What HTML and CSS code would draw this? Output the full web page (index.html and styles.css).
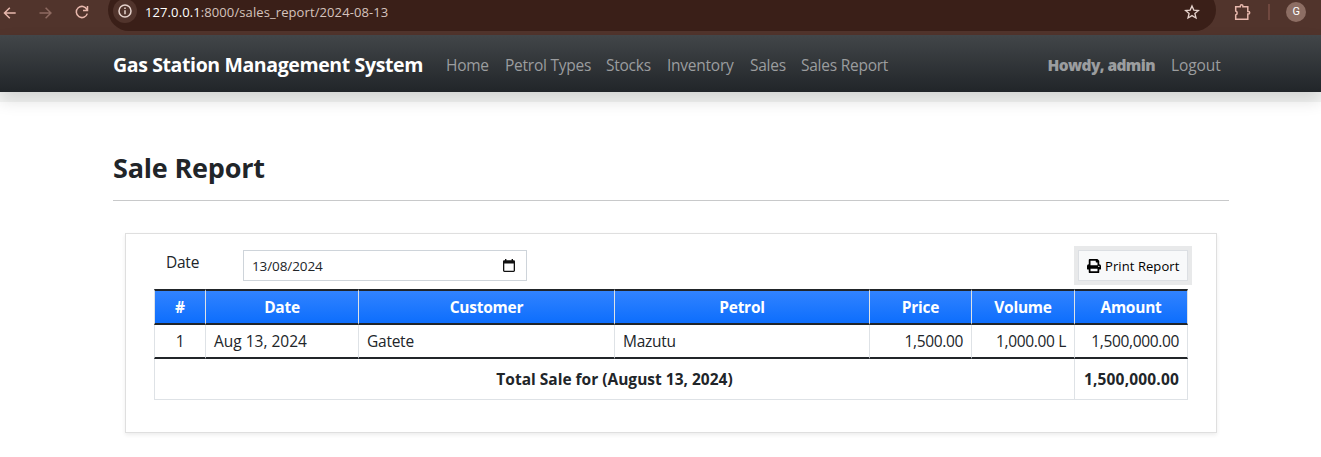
FILE: index.html
```html
<!DOCTYPE html>
<html lang="en">
<head>
<meta charset="utf-8">
<title>Sale Report</title>
<link rel="stylesheet" href="styles.css">
</head>
<body>
<div class="browser">
  <svg class="ico back" width="16" height="16" viewBox="0 0 16 16"><path d="M15.7 8H4.8M9.8 2.7 4.5 8l5.3 5.3"/></svg>
  <svg class="ico fwd" width="16" height="16" viewBox="0 0 16 16"><path d="M1.5 8h11.6M7.6 2.7 12.9 8l-5.3 5.3"/></svg>
  <svg class="ico reload" width="16" height="16" viewBox="0 0 16 16"><path d="M13 5.6A5.6 5.6 0 1 0 13.3 9.6M13.5 2v4.4H9"/></svg>
  <div class="address">
    <span class="info"><svg class="ico" width="16" height="16" viewBox="0 0 16 16"><circle cx="8" cy="8" r="6"/><path d="M8 7.3v3.9M8 4.6v1.5"/></svg></span>
    <span class="url"><b>127.0.0.1</b>:8000/sales_report/2024-08-13</span>
    <svg class="ico star" width="16" height="16" viewBox="0 0 16 16"><path d="m8 1.9 1.8 4.2 4.6.4-3.5 3 1.1 4.5L8 11.6 4 14l1.1-4.500-3.500-3 4.600-.4z"/></svg>
  </div>
  <svg class="ico puzzle" width="18" height="18" viewBox="0 0 18 18"><path d="M2.700 3.700h4.600v-.6a1.300 1.300 0 0 1 2.600 0v.6h4.900v4.700h.6a1.300 1.300 0 0 1 0 2.600h-.6v5.300H2.700v-4.300a2.100 2.100 0 0 0 0-4.000z"/></svg>
  <span class="divider"></span>
  <span class="avatar">G</span>
</div>
<nav class="navbar">
  <a class="brand">Gas Station Management System</a>
  <div class="links">
    <a class="l-home">Home</a><a class="l-types">Petrol Types</a><a class="l-stocks">Stocks</a><a class="l-inv">Inventory</a><a class="l-sales">Sales</a><a>Sales Report</a>
  </div>
  <a class="howdy">Howdy, admin</a>
  <a class="logout">Logout</a>
</nav>
<main class="container">
  <h1>Sale Report</h1>
  <section class="card">
    <div class="filters">
      <label>Date</label>
      <div class="field"><span>13/08/2024</span>
        <svg width="14" height="14" viewBox="0 0 14 14"><path d="M3 0h1.400v1.300h5.200V0H11v1.300h.6c.8 0 1.400.5 1.400 1.300v9c0 .8-.6 1.400-1.400 1.400H2.400C1.600 13 1 12.400 1 11.600v-9c0-.8.6-1.300 1.400-1.300H3zM2.300 4.500v7.200h9.400V4.500z" fill="#111" fill-rule="evenodd"/></svg>
      </div>
      <button class="print"><svg width="14" height="14" viewBox="0 0 512 512"><path d="M448 192V77.300a32 32 0 0 0-9.400-22.600L393.400 9.400A32 32 0 0 0 370.700 0H96a32 32 0 0 0-32 32v160a64 64 0 0 0-64 64v112a16 16 0 0 0 16 16h48v96a32 32 0 0 0 32 32h320a32 32 0 0 0 32-32v-96h48a16 16 0 0 0 16-16V256a64 64 0 0 0-64-64zm-64 256H128v-96h256zm0-224H128V64h192v48a16 16 0 0 0 16 16h48zm48 72a24 24 0 1 1 0-48 24 24 0 0 1 0 48z"/></svg><span>Print Report</span></button>
    </div>
    <table>
      <colgroup><col class="c1"><col class="c2"><col class="c3"><col class="c4"><col class="c5"><col class="c6"><col class="c7"></colgroup>
      <thead><tr><th>#</th><th>Date</th><th>Customer</th><th>Petrol</th><th>Price</th><th>Volume</th><th>Amount</th></tr></thead>
      <tbody><tr><td class="center">1</td><td class="date">Aug 13, 2024</td><td>Gatete</td><td>Mazutu</td><td class="num">1,500.00</td><td class="num">1,000.00 L</td><td class="num">1,500,000.00</td></tr></tbody>
      <tfoot><tr><th colspan="6">Total Sale for (August 13, 2024)</th><th class="num total">1,500,000.00</th></tr></tfoot>
    </table>
  </section>
</main>
</body>
</html>
```
FILE: styles.css
```css
* { box-sizing: border-box; }
body {
  margin: 0;
  height: 457px;
  overflow: hidden;
  background: #fff;
  color: #212529;
  font: 15.5px/24px "Open Sans", "Noto Sans", sans-serif;
  letter-spacing: -.25px;
  white-space: nowrap;
}
svg { display: block; flex: none; }
.ico { fill: none; stroke: #e8b8ad; stroke-width: 1.5; }

.browser {
  display: flex;
  height: 35px;
  padding-bottom: 11px;
  align-items: center;
  background: #51342c;
}
.back { margin-top: 1px; }
.fwd { margin: 1px 0 0 22px; stroke: #8e6a61; }
.reload { margin-left: 20px; }
.address {
  display: flex;
  align-items: center;
  width: 1108px;
  height: 42px;
  margin: -8px 0 -3px 18px;
  padding: 3px 16px 0 5px;
  border-radius: 21px;
  background: #3a1f18;
}
.info {
  display: flex;
  align-items: center;
  justify-content: center;
  width: 24px;
  height: 24px;
  border-radius: 50%;
  background: #51342c;
}
.info .ico, .star { stroke: #e6d3cd; }
.star { stroke-width: 1.3; margin: 1px 0 0 auto; }
.url {
  margin-left: 8px;
  padding-top: 2px;
  color: #d5c3bd;
  font-size: 13px;
  letter-spacing: .1px;
}
.url b { color: #fff; font-weight: 400; }
.puzzle { margin-left: 17px; }
.divider { width: 2px; height: 16px; margin-left: 17px; background: #70483f; }
.avatar {
  width: 20px;
  height: 20px;
  margin-left: 16px;
  border-radius: 50%;
  background: #8d6e64;
  color: #fff;
  font: 11px/20px Roboto, sans-serif;
  text-align: center;
}

.navbar {
  display: flex;
  align-items: center;
  height: 57px;
  padding: 0 100px 0 113px;
  background: linear-gradient(#424649, #212529);
  box-shadow: 0 10px 0 rgba(33, 50, 45, .05), 0 8px 16px rgba(0, 0, 0, .14);
  color: #9b9d9f;
}
.navbar a { padding-top: 2px; }
.navbar .brand { width: 333px; color: #fff; font-size: 19.5px; font-weight: 700; letter-spacing: -.38px; }
.links { display: flex; }
.l-home { width: 59px; }
.l-types { width: 101px; }
.l-stocks { width: 61px; }
.l-inv { width: 83px; }
.l-sales { width: 51px; }
.howdy { margin-left: auto; font-weight: 800; letter-spacing: -.6px; }
.logout { width: 50px; margin-left: 16px; letter-spacing: -.1px; }

.container { width: 1116px; margin-left: 113px; }
h1 {
  margin: 0;
  height: 109px;
  padding-top: 59px;
  border-bottom: 1px solid #c8c9ca;
  font-size: 27px;
  line-height: 34px;
  font-weight: 700;
  letter-spacing: -.2px;
}
.card {
  width: 1092px;
  height: 200px;
  margin: 32px 0 0 12px;
  padding: 12px 28px;
  border: 1px solid #dfdfdf;
  box-shadow: 0 2px 4px rgba(0, 0, 0, .075);
}
.filters { display: flex; height: 43px; }
label { width: 89px; padding: 4px 0 0 12px; }
.field {
  display: flex;
  align-items: center;
  justify-content: space-between;
  width: 284px;
  height: 31px;
  margin-top: 4px;
  padding: 0 10px 0 8px;
  border: 1px solid #ced4da;
  font-size: 13.5px;
  letter-spacing: -.1px;
}
.print {
  display: flex;
  align-items: center;
  gap: 4px;
  width: 110px;
  height: 31px;
  margin: 4px 0 0 auto;
  padding: 0 8px;
  border: 1px solid #dcdfe3;
  box-shadow: 0 0 0 4px #e8e9ea;
  background: #f8f9fa;
  color: #000;
  font: 13px "Open Sans", sans-serif;
  letter-spacing: .08px;
}
table { width: 1034px; table-layout: fixed; border-collapse: separate; border-spacing: 0; }
.c1 { width: 51px; }
.c2 { width: 153px; }
.c3 { width: 256px; }
.c4 { width: 255px; }
.c5 { width: 102px; }
.c6 { width: 103px; }
.c7 { width: 114px; }
th, td { padding: 0 8px; border: 0 solid #dee2e6; border-left-width: 1px; font-weight: 400; text-align: left; }
th:last-child, td:last-child { border-right-width: 1px; }
th { font-weight: 700; text-align: center; }
thead th {
  height: 36px;
  border-top: 2px solid #212529;
  border-bottom: 2px solid #212529;
  background: linear-gradient(#3183ff, #0d6efd);
  color: #fff;
}
tbody td { height: 34px; border-bottom: 2px solid #212529; }
tbody .num { letter-spacing: -.35px; }
tbody .date { letter-spacing: 0; }
tfoot th { height: 41px; border-bottom-width: 1px; letter-spacing: 0; }
tfoot .total { letter-spacing: .17px; }
.num { text-align: right; }
.center { text-align: center; }
```
